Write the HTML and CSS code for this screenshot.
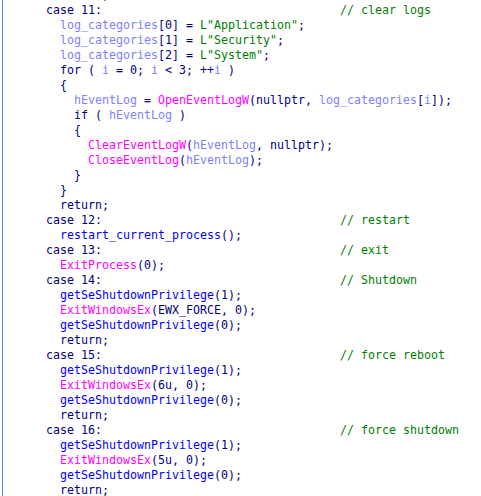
FILE: index.html
```html
<!DOCTYPE html>
<html>
<head>
<meta charset="utf-8">
<link rel="stylesheet" href="styles.css">
</head>
<body>
<div class="view">
<div class="listing">
<div class="ln i1"><span class="k">return;</span></div>
<div class="ln"><span class="cd k">case 11:</span><span class="c">// clear logs</span></div>
<div class="ln i1"><span class="v">log_categories</span><span class="k">[0] = </span><span class="s">L"Application"</span><span class="k">;</span></div>
<div class="ln i1"><span class="v">log_categories</span><span class="k">[1] = </span><span class="s">L"Security"</span><span class="k">;</span></div>
<div class="ln i1"><span class="v">log_categories</span><span class="k">[2] = </span><span class="s">L"System"</span><span class="k">;</span></div>
<div class="ln i1"><span class="k">for ( </span><span class="v">i</span><span class="k"> = 0; </span><span class="v">i</span><span class="k"> &lt; 3; ++</span><span class="v">i</span><span class="k"> )</span></div>
<div class="ln i1"><span class="k">{</span></div>
<div class="ln i2"><span class="v">hEventLog</span><span class="k"> = </span><span class="f">OpenEventLogW</span><span class="k">(nullptr, </span><span class="v">log_categories</span><span class="k">[</span><span class="v">i</span><span class="k">]);</span></div>
<div class="ln i2"><span class="k">if ( </span><span class="v">hEventLog</span><span class="k"> )</span></div>
<div class="ln i2"><span class="k">{</span></div>
<div class="ln i3"><span class="f">ClearEventLogW</span><span class="k">(</span><span class="v">hEventLog</span><span class="k">, nullptr);</span></div>
<div class="ln i3"><span class="f">CloseEventLog</span><span class="k">(</span><span class="v">hEventLog</span><span class="k">);</span></div>
<div class="ln i2"><span class="k">}</span></div>
<div class="ln i1"><span class="k">}</span></div>
<div class="ln i1"><span class="k">return;</span></div>
<div class="ln"><span class="cd k">case 12:</span><span class="c">// restart</span></div>
<div class="ln i1"><span class="u">restart_current_process</span><span class="k">();</span></div>
<div class="ln"><span class="cd k">case 13:</span><span class="c">// exit</span></div>
<div class="ln i1"><span class="f">ExitProcess</span><span class="k">(0);</span></div>
<div class="ln"><span class="cd k">case 14:</span><span class="c">// Shutdown</span></div>
<div class="ln i1"><span class="u">getSeShutdownPrivilege</span><span class="k">(1);</span></div>
<div class="ln i1"><span class="f">ExitWindowsEx</span><span class="k">(EWX_FORCE, 0);</span></div>
<div class="ln i1"><span class="u">getSeShutdownPrivilege</span><span class="k">(0);</span></div>
<div class="ln i1"><span class="k">return;</span></div>
<div class="ln"><span class="cd k">case 15:</span><span class="c">// force reboot</span></div>
<div class="ln i1"><span class="u">getSeShutdownPrivilege</span><span class="k">(1);</span></div>
<div class="ln i1"><span class="f">ExitWindowsEx</span><span class="k">(6u, 0);</span></div>
<div class="ln i1"><span class="u">getSeShutdownPrivilege</span><span class="k">(0);</span></div>
<div class="ln i1"><span class="k">return;</span></div>
<div class="ln"><span class="cd k">case 16:</span><span class="c">// force shutdown</span></div>
<div class="ln i1"><span class="u">getSeShutdownPrivilege</span><span class="k">(1);</span></div>
<div class="ln i1"><span class="f">ExitWindowsEx</span><span class="k">(5u, 0);</span></div>
<div class="ln i1"><span class="u">getSeShutdownPrivilege</span><span class="k">(0);</span></div>
<div class="ln i1"><span class="k">return;</span></div>
</div>
</div>
</body>
</html>
```
FILE: styles.css
```css
html, body {
  margin: 0;
  padding: 0;
  background: #ffffff;
  width: 481px;
  height: 496px;
  overflow: hidden;
}
.view {
  margin-left: 2px;
  border-left: 1px solid #3c8ce6;
  height: 496px;
  padding-left: 43px;
  overflow: hidden;
  background: #ffffff;
}
.listing {
  margin-top: -12px;
  font-family: "DejaVu Sans Mono", "Liberation Mono", monospace;
  font-size: 11.63px;
  line-height: 15px;
  color: #000080;
}
.ln { height: 15px; white-space: pre; }
.i1 { padding-left: 14px; }
.i2 { padding-left: 28px; }
.i3 { padding-left: 42px; }
.cd { display: inline-block; width: 294px; }
.k { color: #000080; }
.v { color: #8080ff; }
.f { color: #ff00ff; }
.u { color: #0000ff; }
.s { color: #008000; }
.c { color: #008000; }
```
